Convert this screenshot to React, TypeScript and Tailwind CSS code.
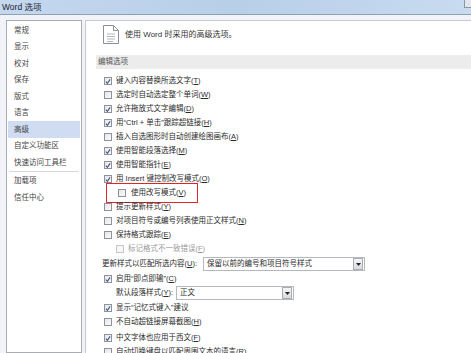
import React from "react";

const font = { fontFamily: '"Liberation Sans", "Noto Sans CJK SC", sans-serif' };

const sideItems = ["常规", "显示", "校对", "保存", "版式", "语言", "高级", "自定义功能区", "快速访问工具栏"];

type Row = {
  text: string;
  key?: string;
  tail?: string;
  checked?: boolean;
  indent?: number;
  mt?: string;
  disabled?: boolean;
  boxed?: boolean;
};

function Label({ text, k, tail }: { text: string; k?: string; tail?: string }) {
  return (
    <span className="whitespace-nowrap">
      {text}
      {k && (
        <>
          (<span className="underline">{k}</span>)
        </>
      )}
      {tail}
    </span>
  );
}

function Check({ checked, disabled }: { checked?: boolean; disabled?: boolean }) {
  return (
    <span
      className={`w-[8px] h-[8px] shrink-0 border flex items-center justify-center ${
        disabled ? "border-[#c8c8c8] bg-[#f7f7f7]" : "border-[#8e9399] bg-gradient-to-br from-[#e4e6ea] to-[#fbfbfb]"
      }`}
    >
      {checked && (
        <svg width="7" height="7" viewBox="0 0 7 7">
          <path d="M1 3.6 L2.8 5.6 L6 1" fill="none" stroke="#3d4f86" strokeWidth="1.2" />
        </svg>
      )}
    </span>
  );
}

function Select({ value, width }: { value: string; width: string }) {
  return (
    <div className={`${width} h-[14px] border border-[#b5b9bf] bg-white flex items-center`}>
      <span className="flex-1 pl-[3px] whitespace-nowrap leading-normal">{value}</span>
      <span className="w-[10px] h-[12px] mr-[1px] border border-[#a9adb3] bg-gradient-to-b from-[#f6f6f6] to-[#d9dbde] flex items-center justify-center">
        <svg width="5" height="3" viewBox="0 0 5 3">
          <path d="M0 0 H5 L2.5 3 Z" fill="#222" />
        </svg>
      </span>
    </div>
  );
}

const rowsA: Row[] = [
  { text: "键入内容替换所选文字", key: "T", checked: true },
  { text: "选定时自动选定整个单词", key: "W" },
  { text: "允许拖放式文字编辑", key: "D", checked: true },
  { text: "用“Ctrl + 单击”跟踪超链接", key: "H", checked: true },
  { text: "插入自选图形时自动创建绘图画布", key: "A" },
  { text: "使用智能段落选择", key: "M", checked: true },
  { text: "使用智能指针", key: "E", checked: true },
  { text: "用 Insert 键控制改写模式", key: "O", checked: true },
  { text: "使用改写模式", key: "V", indent: 14, boxed: true },
  { text: "提示更新样式", key: "Y" },
  { text: "对项目符号或编号列表使用正文样式", key: "N" },
  { text: "保持格式跟踪", key: "E" },
  { text: "标记格式不一致错误", key: "F", indent: 12, disabled: true },
];

const rowsB: Row[] = [
  { text: "显示“记忆式键入”建议", checked: true, mt: "mt-[1px]" },
  { text: "不自动超链接屏幕截图", key: "H" },
  { text: "中文字体也应用于西文", key: "F", checked: true, mt: "mt-[2px]" },
  { text: "自动切换键盘以匹配周围文本的语言", key: "R" },
];

function CheckRow({ r }: { r: Row }) {
  return (
    <div
      className={`relative h-[14px] flex items-center ${r.mt ?? ""} ${r.disabled ? "text-[#9a9a9a]" : ""}`}
      style={{ paddingLeft: 18 + (r.indent ?? 0) }}
    >
      {r.boxed && <div className="absolute left-[20px] top-[-3px] w-[92px] h-[20px] border-[1.5px] border-[#e0242a]" />}
      <Check checked={r.checked} disabled={r.disabled} />
      <span className={r.indent ? (r.disabled ? "ml-[4px]" : "ml-[5px]") : "ml-[4px]"}>
        <Label text={r.text} k={r.key} tail={r.tail} />
      </span>
    </div>
  );
}

export default function App() {
  return (
    <div className="w-[471px] h-[353px] overflow-hidden bg-[#f1f3f6] text-[7.5px] leading-none text-[#2b2b2b]" style={font}>
      {/* title bar */}
      <div className="h-[15px] flex items-center justify-between bg-gradient-to-r from-[#c4d8ee] via-[#b8cfe8] to-[#c8dbf0] border-b border-[#8fa1b7]">
        <span className="pl-[2px] text-[8.5px] text-[#1b2433]">Word 选项</span>
        <span className="w-[7px] h-[8px] self-start border-l border-b border-[#8c96a3] bg-[#dfe6ee]" />
      </div>

      <div className="flex pt-[5px] h-[338px]">
        {/* sidebar */}
        <div className="ml-[6px] w-[76px] border border-[#a7adb6] bg-white pt-[1px] text-[#444]">
          {sideItems.map((s) => (
            <div
              key={s}
              className={`h-[16.5px] flex items-center pl-[6px] mx-[1px] ${s === "高级" ? "bg-[#cfdcf2]" : ""}`}
            >
              {s}
            </div>
          ))}
          <div className="mx-[2px] my-[0.5px] h-px bg-[#d8d8d8]" />
          {["加载项", "信任中心"].map((s) => (
            <div key={s} className="h-[16.5px] flex items-center pl-[7px]">
              {s}
            </div>
          ))}
        </div>

        {/* main panel */}
        <div className="ml-[3px] flex-1 border-l border-t border-[#c5cad1] bg-white">
          <div className="pl-[17px] pt-[4px] h-[23px] flex items-center gap-[6px]">
            <svg width="16" height="19" viewBox="0 0 16 19">
              <path d="M0.5 0.5 H10.5 L15.5 5.5 V18.5 H0.5 Z" fill="#fff" stroke="#8a8f96" />
              <path d="M10.5 0.5 V5.5 H15.5" fill="none" stroke="#8a8f96" />
              <path d="M4 9 H12 M4 11.5 H12 M4 14 H12 M4 16.5 H10" stroke="#b3b7bc" />
            </svg>
            <span className="text-[8px] text-[#333]">使用 Word 时采用的高级选项。</span>
          </div>

          <div className="mt-[11px] ml-[10px] h-[14px] bg-[#ececec] flex items-center pl-[2px] text-[#555]">编辑选项</div>

          <div className="mt-[5px]">
            {rowsA.map((r, i) => (
              <CheckRow key={i} r={r} />
            ))}

            <div className="mt-[1px] h-[14px] flex items-center pl-[16px]">
              <span className="w-[101px]">
                <Label text="更新样式以匹配所选内容" k="U" tail=":" />
              </span>
              <Select value="保留以前的编号和项目符号样式" width="w-[162px]" />
            </div>

            <CheckRow r={{ text: "启用“即点即输”", key: "C", checked: true, mt: "mt-[1px]" }} />

            <div className="h-[14px] flex items-center pl-[30px]">
              <span className="w-[60px]">
                <Label text="默认段落样式" k="Y" tail=":" />
              </span>
              <Select value="正文" width="w-[118px]" />
            </div>

            {rowsB.map((r, i) => (
              <CheckRow key={i} r={r} />
            ))}
          </div>
        </div>
      </div>
    </div>
  );
}
